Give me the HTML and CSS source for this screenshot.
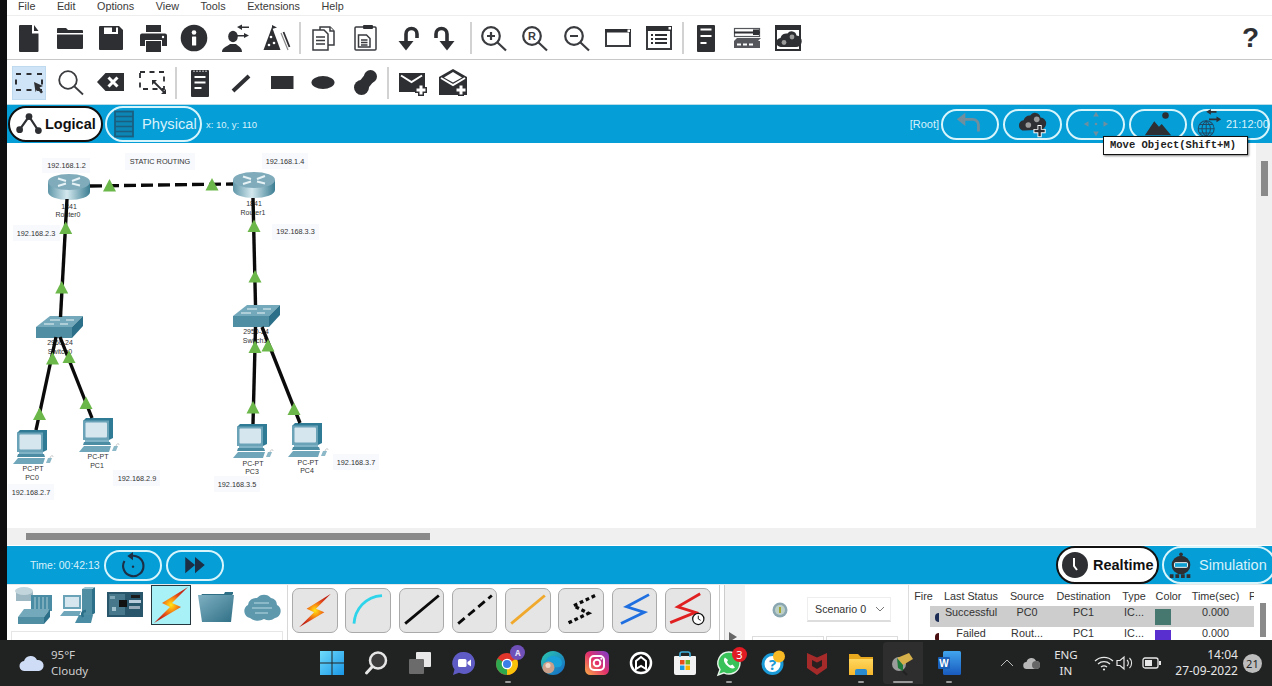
FILE: index.html
```html
<!DOCTYPE html>
<html lang="en">
<head>
<meta charset="utf-8">
<title>Cisco Packet Tracer</title>
<link rel="stylesheet" href="styles.css">
</head>
<body>
<svg class="defs" width="0" height="0" aria-hidden="true">
  <defs>
    <radialGradient id="boltg" cx="50%" cy="50%" r="50%"><stop offset="0" stop-color="#ffe81a"/><stop offset=".28" stop-color="#fba010"/><stop offset=".65" stop-color="#e2481a"/><stop offset="1" stop-color="#c02414"/></radialGradient>
    <linearGradient id="rt" x1="0" x2="1" y1="0" y2="0"><stop offset="0" stop-color="#5f96a8"/><stop offset=".45" stop-color="#d3e8ee"/><stop offset="1" stop-color="#3c7d92"/></linearGradient>
    <linearGradient id="folderg" x1="0" x2="1" y1="0" y2="1"><stop offset="0" stop-color="#7fb0c2"/><stop offset="1" stop-color="#2f6f86"/></linearGradient>
    <linearGradient id="startg" x1="0" x2="1" y1="0" y2="1"><stop offset="0" stop-color="#6fdcfb"/><stop offset="1" stop-color="#1a96e6"/></linearGradient>
    <linearGradient id="instag" x1="0" x2="1" y1="1" y2="0"><stop offset="0" stop-color="#fcb045"/><stop offset=".5" stop-color="#e1306c"/><stop offset="1" stop-color="#7a3fd0"/></linearGradient>
    <linearGradient id="edgeg" x1="0" x2="1" y1="0" y2="1"><stop offset="0" stop-color="#2bc8b0"/><stop offset="1" stop-color="#1468c8"/></linearGradient>
    <linearGradient id="wordg" x1="0" x2="0" y1="0" y2="1"><stop offset="0" stop-color="#41a5ee"/><stop offset="1" stop-color="#185abd"/></linearGradient>
    <linearGradient id="foldery" x1="0" x2="0" y1="0" y2="1"><stop offset="0" stop-color="#ffd75e"/><stop offset="1" stop-color="#f6b72c"/></linearGradient>
    <path id="bolt" d="M37 2 11 18l8 4L3 38l27-16-9-4Z" fill="url(#boltg)"/>
  </defs>
</svg>

<div class="app">
  <div class="strip"></div>
  <main class="main">
    <nav class="menu"><span>File</span><span>Edit</span><span>Options</span><span>View</span><span>Tools</span><span>Extensions</span><span>Help</span></nav>

    <div class="tb tb1">
      <div class="ib"><svg viewBox="0 0 32 32"><path class="d" d="M7 3h12v8.500h6.500V29a1 1 0 0 1-1 1H7a1 1 0 0 1-1-1V4a1 1 0 0 1 1-1Z"/><path class="d" d="M21 3l4.500 6H21Z"/></svg></div>
      <div class="ib"><svg viewBox="0 0 32 32"><path class="d" d="M4 6h8l2 2h14a1 1 0 0 1 1 1v2H3V7a1 1 0 0 1 1-1Z"/><path class="d" d="M3 12.500h26V26a1 1 0 0 1-1 1H4a1 1 0 0 1-1-1Z"/></svg></div>
      <div class="ib"><svg viewBox="0 0 32 32"><path class="d" d="M5 4h4v8h14V4h1l4 4v19a1 1 0 0 1-1 1H5a1 1 0 0 1-1-1V5a1 1 0 0 1 1-1Z"/><rect class="d" x="17" y="4" width="4" height="6"/><rect class="d" x="9" y="4" width="14" height="1.500"/></svg></div>
      <div class="ib"><svg viewBox="0 0 32 32"><rect class="d" x="9" y="3" width="15" height="7"/><path class="d" d="M5 11.500h23a2 2 0 0 1 2 2V24h-5v-6H8v6H3V13.500a2 2 0 0 1 2-2Z"/><rect class="d" x="9" y="19" width="15" height="11"/><circle class="w" cx="26" cy="15" r="1.200"/></svg></div>
      <div class="ib"><svg viewBox="0 0 32 32"><circle class="d" cx="16" cy="16" r="13.300"/><rect class="w" x="14" y="14.500" width="4.200" height="9" rx=".6"/><circle class="w" cx="16" cy="10.500" r="2.300"/></svg></div>
      <div class="ib"><svg viewBox="0 0 32 32"><ellipse class="d" cx="14" cy="14.500" rx="4.800" ry="5.800"/><path class="d" d="M3 30c0-5 6-5.500 8-8h6c2 2.500 6 3 6 8Z"/><path class="d" d="M18 5l5-2.500V4.500h7v1.500h-7V8Z"/><path class="d" d="M30 13.500 25 11v2h-7v1.500h7V16Z"/></svg></div>
      <div class="ib"><svg viewBox="0 0 32 32"><path class="d" d="M3.500 28 12 5l8.500 23Z"/><path class="d" d="M12 3l5 2.500-5 1.500Z"/><circle class="w" cx="11" cy="15" r="1.300"/><circle class="w" cx="14" cy="21" r="1.300"/><circle class="w" cx="9" cy="23" r="1.300"/><path class="ln grey" d="M21 11l7 17"/><path class="ln" d="M23.500 10l6 15"/></svg></div>
      <div class="sep"></div>
      <div class="ib"><svg viewBox="0 0 32 32"><path class="ol" d="M13 8V5h10l4 4v14h-6"/><path class="ol" d="M6 8h11l4 4v16H6Z"/><path class="ol" d="M9 15h9M9 18.500h9M9 22h9M23 5v4h4"/></svg></div>
      <div class="ib"><svg viewBox="0 0 32 32"><rect class="ol" x="6" y="5" width="21" height="23" rx="1"/><rect class="d" x="14" y="3" width="10" height="4" rx="1"/><path class="ol" d="M9.500 13h8l3.500 3.500V25H9.500Z"/><path class="ol" d="M12 18h6.500M12 20.500h6.500M12 23h6.500"/></svg></div>
      <div class="ib"><svg viewBox="0 0 32 32"><path class="heavy" d="M16 20v-8a5.500 5.500 0 0 1 11 0v4"/><path class="d" d="M8.500 19h15L16 28.500Z"/></svg></div>
      <div class="ib"><svg viewBox="0 0 32 32"><path class="heavy" d="M16 20v-8a5.500 5.500 0 0 0-11 0v4"/><path class="d" d="M8.500 19h15L16 28.500Z"/></svg></div>
      <div class="sep"></div>
      <div class="ib"><svg viewBox="0 0 32 32"><circle class="zm" cx="13" cy="14" r="8.800"/><path class="zm" d="M19.500 20.500 28 28.500M9 14h8M13 10v8"/></svg></div>
      <div class="ib"><svg viewBox="0 0 32 32"><circle class="zm" cx="13" cy="14" r="8.800"/><path class="zm" d="M19.500 20.500 28 28.500"/><text class="r" x="13" y="18">R</text></svg></div>
      <div class="ib"><svg viewBox="0 0 32 32"><circle class="zm" cx="13" cy="14" r="8.800"/><path class="zm" d="M19.500 20.500 28 28.500M9 14h8"/></svg></div>
      <div class="ib"><svg viewBox="0 0 32 32"><rect class="ol2" x="4" y="8" width="24" height="16"/><rect class="d" x="3" y="7" width="26" height="3.500"/><rect class="w" x="25.500" y="7.500" width="2.500" height="2.500"/></svg></div>
      <div class="ib"><svg viewBox="0 0 32 32"><rect class="ol2" x="4" y="5" width="24" height="22"/><rect class="d" x="3" y="4" width="26" height="5"/><rect class="w" x="25.500" y="5" width="2.500" height="2.500"/><path class="ln" d="M8 13h2M12 13h12M8 17h2M12 17h12M8 21h2M12 21h12"/></svg></div>
      <div class="sep"></div>
      <div class="ib"><svg viewBox="0 0 32 32"><rect class="d" x="7" y="3" width="18" height="27" rx="1"/><path class="wl" d="M10.500 7.500h11M10.500 14h11M10.500 21h6"/></svg></div>
      <div class="ib"><svg viewBox="0 0 32 32"><rect class="ol3" x="3.500" y="6.500" width="25" height="8"/><path class="ln" d="M3 10.500h26M22 8.500h6M22 12h6"/><path class="d2" d="M6 16h24l-3 3H3Z"/><rect class="d2" x="3" y="19" width="26" height="7"/><path class="wl" d="M6 22.500h4M12 22.500h4M18 22.500h4"/></svg></div>
      <div class="ib"><svg viewBox="0 0 32 32"><rect class="d" x="3" y="3" width="26" height="26"/><rect class="w" x="5" y="8" width="22" height="19"/><path class="d" d="M9 25a4.500 4.500 0 0 1-.5-9 6 6 0 0 1 7-4.500 5 5 0 0 1 9 2 5.500 5.500 0 0 1-1 11.500Z"/><circle class="g" cx="12" cy="20.500" r="2.400"/><circle class="g" cx="20" cy="15" r="2.400"/></svg></div>
      <div class="help">?</div>
    </div>

    <div class="tb tb2">
      <div class="ib sel"><svg viewBox="0 0 32 32"><rect class="dash" x="3" y="7" width="26" height="16"/><path class="d" d="M21 15l9 4-3.500 1.500L30 25l-2 1.500-3.500-4.500-2 3Z"/></svg></div>
      <div class="ib"><svg viewBox="0 0 32 32"><circle class="thin" cx="14" cy="13" r="8.800"/><path class="thin" d="M20.500 19.500 29 27.500"/></svg></div>
      <div class="ib"><svg viewBox="0 0 32 32"><path class="d" d="M2 15l8.500-9H29v18H10.500Z"/><path class="wx" d="M13.500 10.500l9 9M22.500 10.500l-9 9"/></svg></div>
      <div class="ib"><svg viewBox="0 0 32 32"><rect class="dash2" x="3" y="5" width="24" height="17"/><path class="ln" d="M16 14l12 12"/><path class="d" d="M15 13h5l-5 5ZM29 27h-5l5-5Z"/></svg></div>
      <div class="sep"></div>
      <div class="ib"><svg viewBox="0 0 32 32"><rect class="d" x="7" y="3" width="18" height="27" rx="1"/><path class="wl" d="M10.500 10h11M10.500 15.500h11M10.500 21h7"/><path class="wl2" d="M10 3.500v1.500M13 3.500v1.500M16 3.500v1.500M19 3.500v1.500M22 3.500v1.500"/></svg></div>
      <div class="ib"><svg viewBox="0 0 32 32"><path class="lineb" d="M8 24 24 9"/></svg></div>
      <div class="ib"><svg viewBox="0 0 32 32"><rect class="d" x="5" y="9" width="22.500" height="13"/></svg></div>
      <div class="ib"><svg viewBox="0 0 32 32"><ellipse class="d" cx="16" cy="15.500" rx="11.500" ry="6.500"/></svg></div>
      <div class="ib"><svg viewBox="0 0 32 32"><circle class="d" cx="12.500" cy="20.500" r="7.500"/><circle class="d" cx="21.500" cy="9.500" r="6.500"/><path class="blob" d="M13 20 21 10"/></svg></div>
      <div class="sep"></div>
      <div class="ib"><svg viewBox="0 0 32 32"><path class="d" d="M3 6h26v19H3Z"/><path class="wl" d="M5 8.500l10.500 6.500L26 8.500"/><path class="plus" d="M25 17v12M19 23h12"/><path class="plusi" d="M25 18.500v9M20.500 23h9"/></svg></div>
      <div class="ib"><svg viewBox="0 0 32 32"><path class="d" d="M16 2 30 10v18H2V10Z"/><path class="wl" d="M4 11l12 7 12-7"/><path class="wf" d="M16 5 25 10.500 16 15.500 7 10.500Z"/><path class="plus" d="M24 17v12M18 23h12"/><path class="plusi" d="M24 18.500v9M19.500 23h9"/></svg></div>
    </div>

    <div class="bar bar-top">
      <div class="pill pill-on pill-logical">
        <svg viewBox="0 0 32 32"><path class="net" d="M6 22 16 8l10 15"/><circle class="d" cx="6" cy="22" r="3.600"/><circle class="d" cx="16" cy="8" r="3.600"/><circle class="d" cx="26" cy="23" r="3.600"/></svg>
        <b>Logical</b>
      </div>
      <div class="pill pill-physical">
        <svg viewBox="0 0 22 28"><rect class="rack" x="2" y="1.500" width="18" height="25"/><path class="rackl" d="M2 6.500h18M2 11.500h18M2 16.500h18M2 21.500h18"/></svg>
        <span>Physical</span>
      </div>
      <span class="coord">x: 10, y: 110</span>
      <span class="root">[Root]</span>
      <div class="pill pill-sm">
        <svg viewBox="0 0 32 32"><path class="fadeb" d="M9 11h10a6 6 0 0 1 6 6v7"/><path class="fade" d="M11 4v14l-9-7Z"/></svg>
      </div>
      <div class="pill pill-sm w59">
        <svg viewBox="0 0 32 32"><path class="d" d="M7 23a5.500 5.500 0 0 1-1-11 6.500 6.500 0 0 1 7-5 6 6 0 0 1 11 2 6.500 6.500 0 0 1-1 13Z"/><circle class="g" cx="11" cy="17" r="3"/><circle class="g" cx="20" cy="11" r="3"/><path class="plusw" d="M23 17v13M16.500 23.500h13"/><path class="plus2" d="M23 18v11M17.500 23.500h11"/></svg>
      </div>
      <div class="pill pill-sm w59">
        <svg viewBox="0 0 32 32"><path class="fade" d="M13 8l3-5 3 5ZM13 24l3 5 3-5ZM8 13l-5 3 5 3ZM24 13l5 3-5 3Z"/><circle class="fade" cx="16" cy="16" r="1.400"/></svg>
      </div>
      <div class="pill pill-sm">
        <svg viewBox="0 0 32 32"><path class="d" d="M2 28 12 13l5 6 3-3 10 12Z"/><circle class="d" cx="24" cy="7" r="3.500"/></svg>
      </div>
      <div class="pill pill-globe">
        <svg viewBox="0 0 32 32"><circle class="globe" cx="13" cy="21" r="8.500"/><path class="globe" d="M4.500 21h17M13 12.500v17M6 16.500h14M6 25.500h14M13 12.500c-6 5-6 12 0 17M13 12.500c6 5 6 12 0 17"/><path class="ln" d="M16 3h8M16 11h9"/><path class="d" d="M18 0l-5 3 5 3ZM24 8l5 3-5 3Z"/></svg>
        <span>21:12:00</span>
      </div>
    </div>

    <div class="ws">
      <div class="canvas">
        <svg class="topo" viewBox="7 143 1249 385">
          <defs>
            <g id="router">
              <path d="M0 8v10a21 8 0 0 0 42 0V8Z" fill="url(#rt)"/>
              <ellipse cx="21" cy="8" rx="21" ry="8" fill="#7fabbb"/>
              <path d="M10 4.500l8 2.500M32 4l-8 3M10 12l8-2.500M32 11.500l-8-2" stroke="#e6f2f5" stroke-width="2" fill="none"/>
            </g>
            <g id="switch">
              <path d="M14 0h33L36 11H0Z" fill="#74a9bb"/>
              <path d="M0 11h36v11H0Z" fill="#4f8ea3"/>
              <path d="M36 11 47 0v10L36 22Z" fill="#2c6f88"/>
              <path d="M14 4h10M30 4h8M8 8h10M24 8h8" stroke="#e8f3f6" stroke-width="1" fill="none"/>
            </g>
            <g id="pc">
              <path d="M4 3 7 0h27v20l-4 2H4Z" fill="#2f7a94"/>
              <rect x="4" y="2.500" width="26" height="19.500" fill="#6aa3b8"/>
              <rect x="6.500" y="4.500" width="21.500" height="15" rx="1" fill="#d6e6ee"/>
              <path d="M6 22h24v2H6Z" fill="#7fb3c5"/>
              <path d="M5 24h26l1 3H4Z" fill="#4d8da3"/>
              <path d="M0 34l5-6h27l-2 6Z" fill="#6fa6ba"/>
              <path d="M35 28h4l-2 5h-4Z" fill="#8db8c8"/>
              <path d="M37 28c1-3 3-3 3-1" fill="none" stroke="#bbb" stroke-width=".8"/>
            </g>
            <path id="tri" d="M0-6.500 6.500 6h-13Z" fill="#6cb74a"/>
          </defs>

          <rect class="nb" x="42" y="158" width="48" height="15"/>
          <rect class="nb" x="125" y="153" width="70" height="17"/>
          <rect class="nb" x="262" y="153" width="46" height="16"/>
          <rect class="nb" x="13" y="225" width="47" height="16"/>
          <rect class="nb" x="272" y="224" width="47" height="16"/>
          <rect class="nb" x="8" y="484" width="46" height="16"/>
          <rect class="nb" x="113" y="470" width="47" height="16"/>
          <rect class="nb" x="214" y="476" width="46" height="16"/>
          <rect class="nb" x="333" y="454" width="46" height="16"/>

          <text class="ip" x="66.500" y="168">192.168.1.2</text>
          <text class="ip" x="160" y="164">STATIC ROUTING</text>
          <text class="ip" x="285" y="163.500">192.168.1.4</text>
          <text class="ip" x="36" y="235.500">192.168.2.3</text>
          <text class="ip" x="295.500" y="234">192.168.3.3</text>
          <text class="ip" x="31" y="494.500">192.168.2.7</text>
          <text class="ip" x="137" y="480.500">192.168.2.9</text>
          <text class="ip" x="237" y="486.500">192.168.3.5</text>
          <text class="ip" x="356" y="464.500">192.168.3.7</text>

          <text class="lb" x="69" y="209">1841</text>
          <text class="lb" x="68" y="217">Router0</text>
          <text class="lb" x="254" y="206">1841</text>
          <text class="lb" x="253" y="214.500">Router1</text>
          <text class="lb" x="60" y="345">2960-24</text>
          <text class="lb" x="60" y="353.500">Switch0</text>
          <text class="lb" x="256" y="334">2950-24</text>
          <text class="lb" x="255" y="342.500">Switch1</text>
          <text class="lb" x="33" y="470.500">PC-PT</text>
          <text class="lb" x="32" y="479.500">PC0</text>
          <text class="lb" x="98" y="458.500">PC-PT</text>
          <text class="lb" x="97" y="467.500">PC1</text>
          <text class="lb" x="253" y="465.500">PC-PT</text>
          <text class="lb" x="252" y="474">PC3</text>
          <text class="lb" x="308" y="464.500">PC-PT</text>
          <text class="lb" x="307" y="473">PC4</text>

          <use href="#router" x="48" y="174"/>
          <use href="#router" x="233" y="172"/>
          <use href="#switch" x="36" y="316"/>
          <use href="#switch" x="233" y="305"/>
          <use href="#pc" x="13" y="430"/>
          <use href="#pc" x="79" y="418"/>
          <use href="#pc" x="233" y="424"/>
          <use href="#pc" x="288" y="423"/>

          <path class="link dashed" d="M90 186 233 184"/>
          <path class="link" d="M67 199 60.500 317"/>
          <path class="link" d="M253 198 255.500 305"/>
          <path class="link" d="M56 337 36 430"/>
          <path class="link" d="M60 337 92 418"/>
          <path class="link" d="M255.500 327 253 424"/>
          <path class="link" d="M262 327 300 423"/>

          <use href="#tri" x="109.500" y="185.500"/>
          <use href="#tri" x="212" y="184.500"/>
          <use href="#tri" x="65.700" y="228"/>
          <use href="#tri" x="61.700" y="287.500"/>
          <use href="#tri" x="254" y="226"/>
          <use href="#tri" x="255" y="276.500"/>
          <use href="#tri" x="52.500" y="358.500"/>
          <use href="#tri" x="69" y="357"/>
          <use href="#tri" x="39.500" y="414"/>
          <use href="#tri" x="86" y="403"/>
          <use href="#tri" x="255" y="347"/>
          <use href="#tri" x="268" y="345.500"/>
          <use href="#tri" x="253" y="407.500"/>
          <use href="#tri" x="294" y="409"/>
        </svg>
      </div>
      <div class="vscroll"><div class="vthumb"></div></div>
      <div class="hscroll"><div class="hthumb"></div></div>
      <div class="corner"></div>
    </div>

    <div class="bar bar-bot">
      <span class="time">Time: 00:42:13</span>
      <div class="pill pill-ctl">
        <svg viewBox="0 0 32 32"><path class="clock" d="M12 5.500A12.500 12.500 0 1 1 5.500 11"/><path class="dk" d="M16 0v10l-7-5Z"/><circle class="dk" cx="16" cy="18" r="1.500"/></svg>
      </div>
      <div class="pill pill-ctl">
        <svg viewBox="0 0 32 32"><path class="dk" d="M4 6l12 10L4 26ZM16 6l12 10-12 10Z"/></svg>
      </div>
      <div class="pill pill-on pill-real">
        <svg viewBox="0 0 28 28"><circle class="d" cx="14" cy="14" r="13"/><path class="wl" d="M13 7v8l3 4"/></svg>
        <b>Realtime</b>
      </div>
      <div class="pill pill-sim">
        <svg viewBox="0 0 30 30"><circle class="simc" cx="15" cy="15" r="10"/><rect class="rack2" x="8" y="12.500" width="14" height="5" rx="1"/><circle class="d" cx="15" cy="3.500" r="2"/><path class="simb" d="M3 27h24"/></svg>
        <span>Simulation</span>
      </div>
    </div>

    <div class="bottom">
      <div class="palette">
        <div class="pal-row">
          <div class="pal"><svg viewBox="0 0 40 40">
            <path d="M2 6h17v10H2Z" fill="#9db8c2"/><ellipse cx="10" cy="6" rx="9" ry="4" fill="#c2d5dc"/>
            <rect x="17" y="10" width="21" height="16" fill="#4a8ca3"/><path d="M21 12v12M25 12v12M29 12v12M33 12v12" stroke="#a9cbd6" stroke-width="1"/>
            <path d="M10 24h26l-6 8H4Z" fill="#74a9bb"/><path d="M4 32h26v7H4Z" fill="#4f8ea3"/><path d="M30 32l6-8v8l-6 7Z" fill="#2c6f88"/>
          </svg></div>
          <div class="pal"><svg viewBox="0 0 40 40">
            <rect x="4" y="10" width="18" height="14" fill="#6aa3b8"/><rect x="6" y="12" width="14" height="10" fill="#d6e6ee"/>
            <path d="M1 31l4-5h17l-2 5Z" fill="#6fa6ba"/>
            <path d="M23 4h10v26H23Z" fill="#4f8ea3"/><path d="M33 4l3-2v26l-3 2Z" fill="#2c6f88"/><path d="M23 4l3-2h10l-3 2Z" fill="#9cc3d0"/>
            <path d="M16 38l4-8h14l-2 8Z" fill="#4a8ca3"/><path d="M24 32c-2-4 0-6 3-6" fill="none" stroke="#2c6f88" stroke-width="2.500"/>
          </svg></div>
          <div class="pal"><svg viewBox="0 0 40 40">
            <rect x="2" y="7" width="36" height="25" fill="#29566a"/><rect x="4" y="9" width="16" height="21" fill="#47778a"/>
            <rect x="14" y="15" width="8" height="7" fill="#111"/><rect x="24" y="15" width="12" height="3" fill="#bcd"/><rect x="26" y="10" width="9" height="3" fill="#1b1b1b"/><rect x="24" y="21" width="11" height="3" fill="#9ab"/><rect x="5" y="11" width="5" height="3" fill="#7fa6b5"/><rect x="7" y="22" width="4" height="4" fill="#9fc1ce"/>
          </svg></div>
          <div class="pal pal-sel"><svg viewBox="0 0 40 40"><use href="#bolt"/></svg></div>
          <div class="pal"><svg viewBox="0 0 40 40"><path d="M4 12h30l3-3v-2h-8l-1 2H6Z" fill="#2f6f86"/><path d="M2 10h36l-3 27H6Z" fill="url(#folderg)"/></svg></div>
          <div class="pal"><svg viewBox="0 0 40 40"><path d="M8 33a7 7 0 0 1-2-13 8 8 0 0 1 9-7 9 9 0 0 1 14 0 7 7 0 0 1 6 7 7 7 0 0 1-2 13 10 10 0 0 1-11 1 12 12 0 0 1-14-1Z" fill="#5d98ad"/><path d="M12 18h15M10 23h20M13 28h13" stroke="#9cc3d0" stroke-width="1.300"/></svg></div>
        </div>
        <div class="pal-box"></div>
      </div>

      <div class="conns">
        <div class="conn"><svg viewBox="0 0 46 46"><use href="#bolt" x="3" y="3"/></svg></div>
        <div class="conn"><svg viewBox="0 0 46 46"><path class="c-cy" d="M8 37C9 22 20 8 38 7"/></svg></div>
        <div class="conn"><svg viewBox="0 0 46 46"><path class="c-k" d="M5 37 41 7"/></svg></div>
        <div class="conn"><svg viewBox="0 0 46 46"><path class="c-k c-d" d="M5 37 41 7"/></svg></div>
        <div class="conn"><svg viewBox="0 0 46 46"><path class="c-o" d="M5 37 41 7"/></svg></div>
        <div class="conn"><svg viewBox="0 0 46 46"><path class="c-k c-s" d="M38 7 15 18l16 8L8 37"/></svg></div>
        <div class="conn"><svg viewBox="0 0 46 46"><path class="c-b" d="M38 6 14 19l19 6L8 37"/></svg></div>
        <div class="conn"><svg viewBox="0 0 46 46"><path class="c-r" d="M36 5 12 19l19 6L4 36"/><circle class="c-cl" cx="34" cy="32" r="6"/><path class="c-ch" d="M34 28.500V32l2.500 1.500"/></svg></div>
      </div>

      <div class="grip"></div>
      <div class="gray"><div class="tri-right"></div></div>

      <div class="scen">
        <div class="scen-top">
          <svg class="scen-i" viewBox="0 0 16 16"><circle cx="8" cy="8" r="7.500" fill="#8aa6b0"/><circle cx="8" cy="8" r="5" fill="#bcd0c8"/><path d="M8 5v6" stroke="#a2a832" stroke-width="2"/></svg>
          <div class="drop"><span>Scenario 0</span><svg viewBox="0 0 10 6"><path d="M1 1l4 4 4-4" fill="none" stroke="#777" stroke-width="1"/></svg></div>
        </div>
        <div class="scen-btns"><div class="sbtn"></div><div class="sbtn"></div></div>
      </div>

      <div class="evt">
        <div class="evt-table">
          <div class="evt-head"><span>Fire</span><span>Last Status</span><span>Source</span><span>Destination</span><span>Type</span><span>Color</span><span>Time(sec)</span><span class="cut">P</span></div>
          <div class="evt-row r-on"><i class="mark m1"></i><span>Successful</span><span>PC0</span><span>PC1</span><span>IC...</span><i class="sw s1"></i><span>0.000</span><span></span></div>
          <div class="evt-row"><i class="mark m2"></i><span>Failed</span><span>Rout...</span><span>PC1</span><span>IC...</span><i class="sw s2"></i><span>0.000</span><span></span></div>
        </div>
        <div class="evt-scroll"></div>
      </div>
    </div>
  </main>
</div>

<footer class="task">
  <div class="weather">
    <svg viewBox="0 0 26 18"><path d="M6 17a5 5 0 0 1-1-10 7 7 0 0 1 13-1 5.500 5.500 0 0 1 2 11Z" fill="#cfdcf5"/></svg>
    <div class="wtext"><span>95°F</span><span>Cloudy</span></div>
  </div>
  <div class="apps">
    <div class="tapp"><svg viewBox="0 0 24 24"><path d="M0 0h11.500v11.500H0ZM12.500 0H24v11.500H12.500ZM0 12.500h11.500V24H0ZM12.500 12.500H24V24H12.500Z" fill="url(#startg)"/></svg></div>
    <div class="tapp"><svg viewBox="0 0 24 24"><circle cx="14" cy="9.500" r="8" fill="#3c3c3c" stroke="#e6e6e6" stroke-width="2.500"/><path d="M8 16 2.500 22" stroke="#e6e6e6" stroke-width="3" stroke-linecap="round"/></svg></div>
    <div class="tapp"><svg viewBox="0 0 24 24"><rect x="8" y="1" width="15" height="15" rx="1" fill="#e8e8e8"/><rect x="1" y="8" width="15" height="15" rx="1" fill="#6b6b6b"/></svg></div>
    <div class="tapp"><svg viewBox="0 0 24 24"><path d="M12 1a11 11 0 1 1-5 20.800L1 24l1.500-5.500A11 11 0 0 1 12 1Z" fill="#5f5bc4"/><rect x="6" y="8" width="8.500" height="8" rx="1.500" fill="#fff"/><path d="M15.500 11l3.500-2.500v7L15.500 13Z" fill="#fff"/></svg></div>
    <div class="tapp dot"><svg viewBox="0 0 24 24"><circle cx="11" cy="13" r="11" fill="#e0352b"/><path d="M11 13 20.500 7.500A11 11 0 0 1 11 24Z" fill="#f9c20a"/><path d="M11 13V24A11 11 0 0 1 1.500 7.500Z" fill="#2ea84f"/><circle cx="11" cy="13" r="5.300" fill="#fff"/><circle cx="11" cy="13" r="4" fill="#3a7fe8"/></svg><b class="ava">A</b></div>
    <div class="tapp"><svg viewBox="0 0 24 24"><circle cx="12" cy="12" r="12" fill="url(#edgeg)"/><path d="M12 5c5 0 9 3 9 7s-3 5-7 4c-2-.5-2-3-1-4-3-1-7 0-9 3 0-6 3-10 8-10Z" fill="#18a0d8"/><circle cx="7.500" cy="16.500" r="6" fill="#caa08a"/><circle cx="7" cy="14.500" r="2.500" fill="#f0d8c8"/></svg></div>
    <div class="tapp"><svg viewBox="0 0 24 24"><rect width="24" height="24" rx="5.500" fill="url(#instag)"/><rect x="5" y="5" width="14" height="14" rx="4" fill="none" stroke="#fff" stroke-width="2"/><circle cx="12" cy="12" r="3.300" fill="none" stroke="#fff" stroke-width="2"/><circle cx="16.300" cy="7.700" r="1" fill="#fff"/></svg></div>
    <div class="tapp"><svg viewBox="0 0 24 24"><circle cx="12" cy="12" r="10" fill="#111" stroke="#fff" stroke-width="2.500"/><path d="M7 18V10l5-4 5 4v8l-5-3Z" fill="none" stroke="#fff" stroke-width="2"/></svg></div>
    <div class="tapp"><svg viewBox="0 0 24 24"><path d="M2 5h20a1 1 0 0 1 1 1v16a2 2 0 0 1-2 2H3a2 2 0 0 1-2-2V6a1 1 0 0 1 1-1Z" fill="#f2f2f2"/><path d="M7 6V3a2 2 0 0 1 2-2h6a2 2 0 0 1 2 2v3" fill="none" stroke="#3db0dc" stroke-width="1.600"/><rect x="7" y="9" width="4.500" height="4.500" fill="#e74c1a"/><rect x="12.500" y="9" width="4.500" height="4.500" fill="#6fb52a"/><rect x="7" y="14.500" width="4.500" height="4.500" fill="#1a9ae0"/><rect x="12.500" y="14.500" width="4.500" height="4.500" fill="#f7b500"/></svg></div>
    <div class="tapp dot"><svg viewBox="0 0 24 24"><path d="M12 1a11 11 0 1 1-5 20.800L1 24l2-5.500A11 11 0 0 1 12 1Z" fill="#39c15a" stroke="#e8f5ea" stroke-width="1.400"/><path d="M8 6.500c-2 2-1 5 2 8s6 4 8 2l-2.500-3-2 1c-1.500-.5-3-2-3.500-3.500l1-2Z" fill="#fff"/></svg><b class="badge3">3</b></div>
    <div class="tapp"><svg viewBox="0 0 24 24"><circle cx="11.500" cy="13" r="9.500" fill="#fff" stroke="#1b9ad8" stroke-width="3"/><text class="qm" x="11.500" y="18.500">?</text><circle cx="18" cy="5.500" r="6" fill="#f7b924"/></svg></div>
    <div class="tapp"><svg viewBox="0 0 24 24"><path d="M2 2l10 4.500L22 2v15l-10 7-10-7Z" fill="#a52a2a"/><path d="M7 9l5 2.500L17 9v6l-5 3-5-3Z" fill="#2a2020"/></svg></div>
    <div class="tapp dot"><svg viewBox="0 0 24 24"><path d="M0 3h9l3 3h12v18H0Z" fill="#e8a91e"/><path d="M0 8h24v16H0Z" fill="url(#foldery)"/><path d="M6 24v-4a2 2 0 0 1 2-2h8a2 2 0 0 1 2 2v4Z" fill="#2a8ccf"/></svg></div>
    <div class="tapp dot active"><svg viewBox="0 0 24 24"><circle cx="8" cy="13" r="7" fill="#9b9b9b"/><path d="M6 7l12-5 4 6-10 6Z" fill="#d6b04a"/><path d="M6 7l6 7v6l-5-3Z" fill="#1f7a3a"/><path d="M12 20l4 4" stroke="#222" stroke-width="2"/></svg></div>
    <div class="tapp dot"><svg viewBox="0 0 24 24"><rect x="6" y="0" width="18" height="24" rx="1.500" fill="url(#wordg)"/><rect x="1" y="6" width="12" height="12" rx="1" fill="#1a5fb8"/><text class="wd" x="7" y="15.500">W</text></svg></div>
  </div>
  <div class="tray">
    <svg class="t-chev" viewBox="0 0 14 8"><path d="M1 7l6-6 6 6" fill="none" stroke="#bbb" stroke-width="1"/></svg>
    <svg class="t-cloud" viewBox="0 0 18 14"><path d="M4 13a3.500 3.500 0 0 1-.5-7A5 5 0 0 1 13 5a3.500 3.500 0 0 1 0 8Z" fill="#b8b8b8"/><circle cx="13" cy="9" r="4" fill="#666"/></svg>
    <div class="t-lang"><span>ENG</span><span>IN</span></div>
    <svg class="t-wifi" viewBox="0 0 20 16"><path d="M1 6a13 13 0 0 1 18 0M4 9a9 9 0 0 1 12 0M7 12a5 5 0 0 1 6 0" fill="none" stroke="#e8e8e8" stroke-width="1.300"/><circle cx="10" cy="14.500" r="1.100" fill="#e8e8e8"/></svg>
    <svg class="t-vol" viewBox="0 0 18 16"><path d="M1 5.500h3L8 2v12L4 10.500H1Z" fill="none" stroke="#e8e8e8" stroke-width="1.200"/><path d="M11 5a4 4 0 0 1 0 6M13.500 3a7 7 0 0 1 0 10" fill="none" stroke="#e8e8e8" stroke-width="1.100"/></svg>
    <svg class="t-bat" viewBox="0 0 20 12"><rect x="1" y="1" width="15" height="10" rx="2" fill="none" stroke="#e8e8e8" stroke-width="1.300"/><rect x="3" y="3" width="7" height="6" fill="#e8e8e8"/><rect x="17" y="4" width="2" height="4" fill="#e8e8e8"/></svg>
    <div class="t-clock"><span>14:04</span><span>27-09-2022</span></div>
    <div class="t-badge">21</div>
  </div>
</footer>

<div class="tooltip">Move Object(Shift+M)</div>
</body>
</html>
```

FILE: styles.css
```css
* { box-sizing: border-box; }
html, body { margin: 0; padding: 0; }
body {
  width: 1272px;
  height: 686px;
  overflow: hidden;
  position: relative;
  background: #fff;
  font-family: "Liberation Sans", Arial, sans-serif;
  color: #333;
}
.defs { position: absolute; }
svg { display: block; }

.d { fill: #2e2f33; }
.w { fill: #fff; }
.g { fill: #9a9a9a; }
.d2 { fill: #55575c; }
.dk { fill: #1d2f45; }
.ln { fill: none; stroke: #2e2f33; stroke-width: 1.800; }
.ln.grey { stroke: #888; stroke-width: 1.200; }
.ol { fill: #fff; stroke: #3a3b3f; stroke-width: 1.500; }
.ol2 { fill: #fff; stroke: #3a3b3f; stroke-width: 2; }
.ol3 { fill: #fff; stroke: #55575c; stroke-width: 1.200; }
.heavy { fill: none; stroke: #2e2f33; stroke-width: 3.600; }
.zm { fill: none; stroke: #3a3b3f; stroke-width: 2.200; }
.thin { fill: none; stroke: #3a3b3f; stroke-width: 1.800; }
.r { font: bold 11px "Liberation Sans", sans-serif; text-anchor: middle; fill: #3a3b3f; }
.wl { fill: none; stroke: #fff; stroke-width: 2; }
.wl2 { fill: none; stroke: #fff; stroke-width: 1; }
.wx { fill: none; stroke: #fff; stroke-width: 3; }
.wf { fill: #fff; }
.dash { fill: none; stroke: #2e2f33; stroke-width: 2; stroke-dasharray: 5 5.500; }
.dash2 { fill: none; stroke: #2e2f33; stroke-width: 1.800; stroke-dasharray: 5 4.500; }
.lineb { fill: none; stroke: #2e2f33; stroke-width: 4; }
.blob { fill: none; stroke: #2e2f33; stroke-width: 11; }
.plus { fill: none; stroke: #2e2f33; stroke-width: 6; }
.plusi { fill: none; stroke: #fff; stroke-width: 3; }
.plusw { fill: none; stroke: #fff; stroke-width: 4.500; }
.plus2 { fill: none; stroke: #2e2f33; stroke-width: 2.600; }

.app { display: flex; height: 640px; }
.strip { width: 7px; flex: none; background: #0e0e11; }
.main { width: 1265px; flex: none; display: flex; flex-direction: column; overflow: hidden; }

.menu {
  height: 16px;
  display: flex;
  align-items: center;
  gap: 21.500px;
  padding: 0 0 3px 11px;
  font-size: 10.800px;
  color: #3a3a3a;
  border-bottom: 1px solid #eee;
}

.tb { display: flex; align-items: center; padding-left: 1.500px; }
.tb1 { height: 44px; padding-top: 1px; border-bottom: 1px solid #c8c8c8; }
.tb2 { height: 45px; padding-top: 2px; border-bottom: 1px solid #b8dde8; }
.ib { width: 41.200px; flex: none; display: flex; justify-content: center; }
.ib svg { width: 32px; height: 32px; }
.sel svg { background: #cfe5f7; outline: 1px solid #bfd9ee; }
.sep { width: 2px; height: 32px; margin: 0 2px; background: #d2d2d2; flex: none; }
.help { margin-left: auto; margin-right: 13px; font-weight: bold; font-size: 28px; line-height: 32px; color: #2e2f33; }

.bar { height: 38px; flex: none; background: #069ed7; display: flex; align-items: center; color: #d8f2fb; }
.bar-top { padding-left: 1px; padding-right: 2px; }
.pill { border: 2px solid #d8f5fc; border-radius: 19px; display: flex; align-items: center; flex: none; }
.pill-on { background: #fff; border-color: #111; color: #111; }
.pill-logical { width: 95px; height: 36px; padding-left: 4px; gap: 1px; }
.pill-logical svg { width: 30px; height: 30px; }
.pill-logical b { font-size: 14.500px; }
.net { fill: none; stroke: #2e2f33; stroke-width: 2.300; }
.pill-physical { width: 97px; height: 36px; margin-left: 2px; padding-left: 6px; gap: 7px; font-size: 14.700px; }
.pill-physical svg { width: 22px; height: 28px; }
.rack { fill: #0b86b5; stroke: #1a5f80; stroke-width: 1.800; }
.rackl { fill: none; stroke: #1a5f80; stroke-width: 1.500; }
.rack2 { fill: #0f9fd0; stroke: #fff; stroke-width: 1; }
.coord { margin-left: 4px; font-size: 9.500px; }
.root { margin-left: auto; margin-right: -2px; font-size: 11px; }
.pill-sm { width: 58px; height: 31px; margin-left: 4px; justify-content: center; }
.w59 { width: 59px; }
.pill-sm svg { width: 30px; height: 30px; }
.fade { fill: #6f8f9f; }
.fadeb { fill: none; stroke: #6f8f9f; stroke-width: 3; }
.pill-globe { width: 79px; height: 31px; margin-left: 4px; padding-left: 1px; gap: 2px; font-size: 11px; }
.pill-globe svg { width: 30px; height: 30px; overflow: visible; }
.globe { fill: none; stroke: #1f4a66; stroke-width: 1.100; }

.ws { height: 403px; flex: none; display: grid; grid-template-columns: 1249px 16px; grid-template-rows: 385px 17px 1px; }
.canvas { overflow: hidden; }
.topo { width: 1249px; height: 385px; }
.nb { fill: #f8f9fd; }
.ip { font: 7.300px "Liberation Sans", sans-serif; fill: #333; text-anchor: middle; }
.lb { font: 7px "Liberation Sans", sans-serif; fill: #333; text-anchor: middle; }
.link { fill: none; stroke: #0a0a0a; stroke-width: 3.400; }
.dashed { stroke-dasharray: 12 5; }
.vscroll { background: #f0f0f0; padding: 18px 0 0 5px; }
.vthumb { width: 7px; height: 35px; background: #8a8a8a; }
.hscroll { background: #f0f0f0; padding: 5px 0 0 19px; }
.hthumb { width: 404px; height: 7px; background: #8a8a8a; }
.corner { background: #f0f0f0; }

.bar-bot { padding-left: 23px; }
.time { font-size: 10.500px; width: 74px; }
.pill-ctl { width: 58px; height: 31px; justify-content: center; margin-right: 4px; }
.pill-ctl svg { width: 26px; height: 26px; }
.clock { fill: none; stroke: #1d2f45; stroke-width: 2.600; }
.pill-real { margin-left: auto; width: 103px; height: 38px; padding-left: 3px; gap: 4px; }
.pill-real svg { width: 28px; height: 28px; }
.pill-real b { font-size: 14.500px; }
.pill-sim { width: 114px; height: 38px; margin-left: 3px; margin-right: -4px; padding-left: 3px; gap: 4px; font-size: 14.500px; }
.pill-sim svg { width: 28px; height: 28px; }
.simc { fill: #2e2f33; }
.simb { fill: none; stroke: #2e2f33; stroke-width: 4; stroke-dasharray: 4 2; }

.bottom { height: 56px; flex: none; display: flex; overflow: hidden; background: #fff; border-top: 1px solid #e8e8e8; }
.palette { width: 281px; flex: none; border-right: 1px solid #d8d8d8; padding-left: 4px; }
.pal-row { display: flex; height: 41px; }
.pal { width: 45.600px; flex: none; display: flex; justify-content: center; }
.pal svg { width: 40px; height: 40px; }
.pal-sel svg { background: #a8f1f6; outline: 1px solid #26363f; outline-offset: -1px; }
.pal-box { width: 272px; height: 30px; margin-top: 5px; border: 1px solid #e6e6e6; }

.conns { width: 431px; flex: none; display: flex; gap: 7.700px; padding: 3px 0 0 4px; }
.conn { width: 45.600px; height: 45px; flex: none; background: #e5e5e5; border: 1px solid #aaa; border-radius: 7px; }
.conn svg { width: 44px; height: 43px; }
.c-cy, .c-k, .c-o, .c-b, .c-r { fill: none; stroke-width: 3; }
.c-cy { stroke: #2ed4ea; }
.c-k { stroke: #0a0a0a; }
.c-d { stroke-dasharray: 9 5; }
.c-s { stroke-dasharray: 4 3; stroke-width: 3.500; }
.c-o { stroke: #f0a92c; }
.c-b { stroke: #1f6fe0; }
.c-r { stroke: #e02020; }
.c-cl { fill: #fff; stroke: #111; stroke-width: 1.300; }
.c-ch { fill: none; stroke: #111; stroke-width: 1; }

.grip { width: 6px; flex: none; border-left: 1px solid #ccc; border-right: 1px solid #ccc; }
.gray { width: 20px; flex: none; background: #f1f1f1; padding: 47px 0 0 4px; }
.tri-right { width: 0; height: 0; border-left: 8px solid #666; border-top: 5px solid transparent; border-bottom: 5px solid transparent; }

.scen { width: 163px; flex: none; padding-top: 12px; font-size: 10.700px; }
.scen-top { display: flex; align-items: center; }
.scen-i { width: 16px; height: 16px; margin: 0 19px 0 27px; }
.drop { width: 84px; height: 25px; display: flex; align-items: center; justify-content: space-between; padding: 0 5px 0 7px; border: 1px solid #eee; border-bottom: 2px solid #ddd; }
.drop svg { width: 10px; height: 6px; }
.scen-btns { display: flex; gap: 2px; margin: 14px 0 0 7px; }
.sbtn { width: 72px; height: 20px; border: 1px solid #ddd; }

.evt { flex: 1; display: flex; border-left: 1px solid #ddd; font-size: 10.800px; color: #333; }
.evt-table { width: 349px; flex: none; }
.evt-head { display: grid; grid-template-columns: 29px 66px 46px 67px 34px 35px 59px 13px; height: 21px; align-items: center; text-align: center; overflow: hidden; }
.evt-head .cut { text-align: left; padding-left: 4px; width: 9px; overflow: hidden; }
.evt-row { display: grid; grid-template-columns: 8px 66px 46px 67px 34px 35px 59px 9px; width: 324px; height: 21px; margin-left: 21px; text-align: center; line-height: 13px; }
.r-on { background: #cdcdcd; }
.mark { display: block; width: 4px; height: 9px; margin: 7px 0 0 5px; border-radius: 4px 0 0 4px; }
.m1 { background: #1c2d55; }
.m2 { background: #4a0f10; margin-top: 6px; }
.sw { display: block; width: 16px; height: 16px; margin: 3px 0 0 4px; }
.s1 { background: #47786f; }
.s2 { background: #5a2fd0; }
.evt-scroll { width: 6px; height: 34px; margin: 18px 0 0 2px; background: #8a8a8a; }

.task { height: 46px; display: flex; background: #212222; color: #e6e6e6; font-family: "Noto Sans", "Open Sans", sans-serif; }
.weather { width: 310px; flex: none; display: flex; align-items: center; padding-left: 19px; gap: 6px; }
.weather svg { width: 26px; height: 18px; }
.wtext { display: flex; flex-direction: column; font-size: 11.500px; line-height: 16px; color: #cfcfcf; }
.apps { display: flex; flex: none; }
.tapp { width: 44.100px; height: 46px; flex: none; display: flex; align-items: center; justify-content: center; position: relative; }
.tapp svg { width: 24px; height: 24px; overflow: visible; }
.dot::after { content: ""; position: absolute; left: 19px; bottom: 3px; width: 6px; height: 2px; border-radius: 1px; background: #9a9a9a; }
.active { background: linear-gradient(#2e2e2e, #2e2e2e) no-repeat; background-size: 40px 100%; border-radius: 4px; height: 42px; margin-top: 2px; padding-right: 4px; }
.active::after { left: 10px; width: 20px; bottom: 1px; }
.ava { position: absolute; left: 24px; top: 5px; width: 15px; height: 15px; border-radius: 50%; background: #6e50b8; color: #e8e0f8; font: bold 8px/15px "Noto Sans", sans-serif; text-align: center; }
.badge3 { position: absolute; left: 25px; top: 7px; width: 15px; height: 15px; border-radius: 50%; background: #e01b24; color: #fff; font: 11px/15px "Noto Sans", sans-serif; text-align: center; }
.qm { font: bold 15px "Noto Sans", sans-serif; fill: #1b9ad8; text-anchor: middle; }
.wd { font: bold 10px "Liberation Sans", sans-serif; fill: #fff; text-anchor: middle; }

.tray { flex: 1; display: flex; align-items: center; padding-left: 28.500px; }
.t-chev { width: 14px; height: 8px; margin-right: 9px; }
.t-cloud { width: 18px; height: 14px; margin-right: 5px; }
.t-lang { width: 40px; display: flex; flex-direction: column; align-items: center; font-size: 11.500px; line-height: 16px; }
.t-wifi { width: 20px; height: 16px; margin-left: 8px; }
.t-vol { width: 18px; height: 16px; margin-left: 2px; }
.t-bat { width: 20px; height: 12px; margin-left: 8px; }
.t-clock { width: 76px; display: flex; flex-direction: column; align-items: flex-end; font-size: 12px; line-height: 16px; }
.t-badge { width: 19px; height: 19px; margin-left: 5px; border-radius: 50%; background: #bdbdbd; color: #222; font-size: 11px; line-height: 19px; text-align: center; }

.tooltip {
  position: absolute;
  left: 1103px;
  top: 136px;
  width: 145px;
  height: 19px;
  padding-left: 6px;
  background: #fff;
  border: 1px solid #111;
  box-shadow: 1px 1px 2px rgba(0,0,0,.5);
  font: bold 10.500px/17px "Liberation Mono", monospace;
  color: #222;
}
```
